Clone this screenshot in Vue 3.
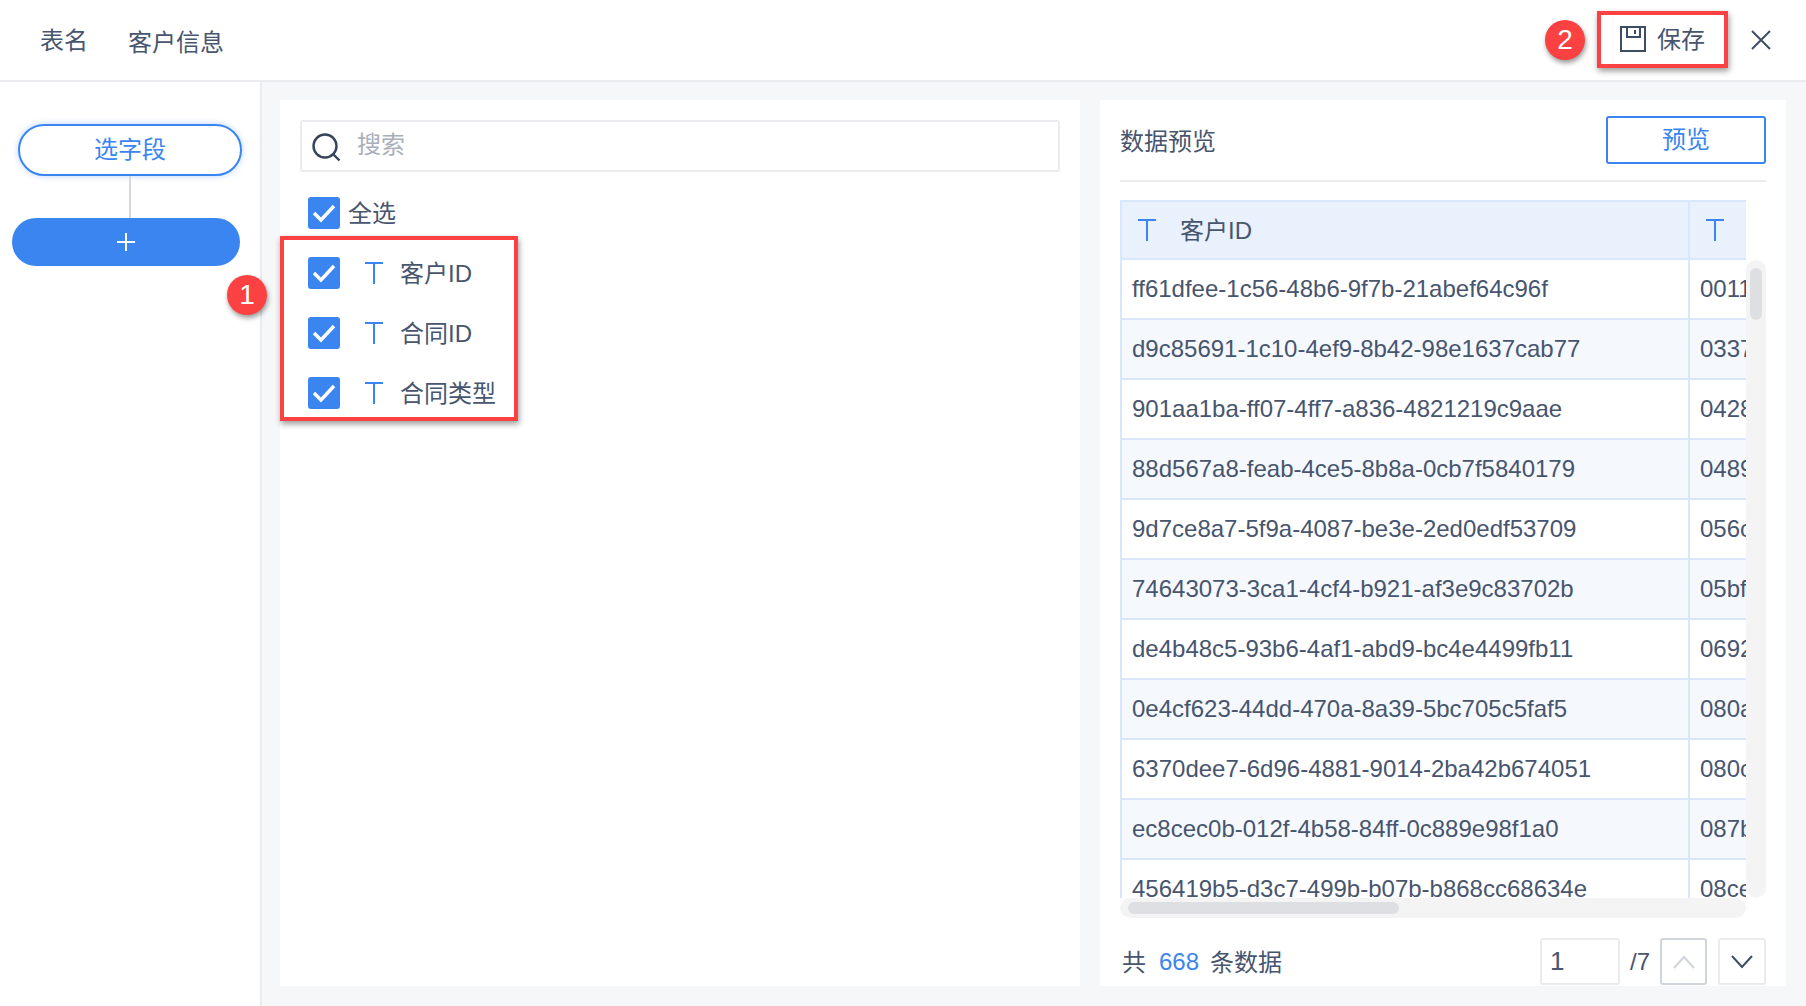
<script setup>
const fields = ['客户ID', '合同ID', '合同类型']
const rows = [
  ['ff61dfee-1c56-48b6-9f7b-21abef64c96f', '0011a2b3'],
  ['d9c85691-1c10-4ef9-8b42-98e1637cab77', '0337c1d2'],
  ['901aa1ba-ff07-4ff7-a836-4821219c9aae', '0428e5f6'],
  ['88d567a8-feab-4ce5-8b8a-0cb7f5840179', '0489a7b8'],
  ['9d7ce8a7-5f9a-4087-be3e-2ed0edf53709', '056c1f2e'],
  ['74643073-3ca1-4cf4-b921-af3e9c83702b', '05bf3d4c'],
  ['de4b48c5-93b6-4af1-abd9-bc4e4499fb11', '06925a6b'],
  ['0e4cf623-44dd-470a-8a39-5bc705c5faf5', '080a7c8d'],
  ['6370dee7-6d96-4881-9014-2ba42b674051', '080c9e0f'],
  ['ec8cec0b-012f-4b58-84ff-0c889e98f1a0', '087b1a2b'],
  ['456419b5-d3c7-499b-b07b-b868cc68634e', '08ce3c4d'],
]
</script>

<template>
  <div class="page">
    <header class="top">
      <span class="tname">表名</span>
      <span class="tval">客户信息</span>
      <div class="spacer"></div>
      <div class="save">
        <svg class="save-ic" width="26" height="26" viewBox="0 0 26 26" fill="none" stroke="#3d4d66" stroke-width="2">
          <path d="M1 1h24v24H1z" />
          <path d="M7 1v10h13V1" />
          <path d="M15 4v4" />
        </svg>
        <span class="save-label">保存</span>
      </div>
      <svg class="close" width="22" height="22" viewBox="0 0 22 22" fill="none" stroke="#3d4d66" stroke-width="2">
        <path d="M2 2l18 18M20 2L2 20" />
      </svg>
    </header>

    <div class="body">
      <aside class="side">
        <div class="node">选字段</div>
        <div class="link"></div>
        <div class="add">
          <svg width="18" height="18" viewBox="0 0 18 18" stroke="#fff" stroke-width="2"><path d="M9 0v18M0 9h18" /></svg>
        </div>
      </aside>

      <section class="mid">
        <div class="search">
          <svg width="30" height="30" viewBox="0 0 30 30" fill="none" stroke="#35435b" stroke-width="2.4">
            <circle cx="14" cy="14" r="11.5" />
            <path d="M22.5 22.5l6 6" />
          </svg>
          <span>搜索</span>
        </div>
        <div class="check-row all">
          <span class="cb"><svg width="24" height="20" viewBox="0 0 24 20" fill="none" stroke="#fff" stroke-width="3.4"><path d="M2 10l7 7L22 3" /></svg></span>
          <span class="all-label">全选</span>
        </div>
        <div v-for="f in fields" :key="f" class="check-row">
          <span class="cb"><svg width="24" height="20" viewBox="0 0 24 20" fill="none" stroke="#fff" stroke-width="3.4"><path d="M2 10l7 7L22 3" /></svg></span>
          <svg class="t" width="20" height="24" viewBox="0 0 20 24" fill="none" stroke="#3a85f0" stroke-width="2"><path d="M1 2h18M10 2v21" /></svg>
          <span class="f-label">{{ f }}</span>
        </div>
      </section>

      <section class="right">
        <div class="r-head">
          <span class="r-title">数据预览</span>
          <div class="btn">预览</div>
        </div>
        <div class="grid-wrap">
          <div class="grid">
            <div class="tr th">
              <div class="c1">
                <svg width="18" height="24" viewBox="0 0 18 24" fill="none" stroke="#3a85f0" stroke-width="2"><path d="M0 2h18M9 2v21" /></svg>
                <span class="th-label">客户ID</span>
              </div>
              <div class="c2">
                <svg width="18" height="24" viewBox="0 0 18 24" fill="none" stroke="#3a85f0" stroke-width="2"><path d="M0 2h18M9 2v21" /></svg>
              </div>
            </div>
            <div v-for="r in rows" :key="r[0]" class="tr">
              <div class="c1">{{ r[0] }}</div>
              <div class="c2">{{ r[1] }}</div>
            </div>
          </div>
          <div class="vbar"><div class="vthumb"></div></div>
        </div>
        <div class="hbar"><div class="hthumb"></div></div>
        <div class="foot">
          <span class="foot-t">共</span>
          <span class="num">668</span>
          <span class="foot-t">条数据</span>
          <div class="spacer"></div>
          <div class="pg-input">1</div>
          <span class="pg-total">/7</span>
          <div class="pg-btn up">
            <svg width="22" height="14" viewBox="0 0 22 14" fill="none" stroke="#d0d4db" stroke-width="2"><path d="M1 13L11 2l10 11" /></svg>
          </div>
          <div class="pg-btn down">
            <svg width="22" height="14" viewBox="0 0 22 14" fill="none" stroke="#3d4d66" stroke-width="2"><path d="M1 1l10 11L21 1" /></svg>
          </div>
        </div>
      </section>
    </div>

    <div class="mark mark-fields"></div>
    <div class="mark mark-save"></div>
    <div class="badge badge-1">1</div>
    <div class="badge badge-2">2</div>
  </div>
</template>

<style>
html, body { margin: 0; background: #fff; }
</style>

<style scoped>
.page {
  position: relative;
  width: 1806px;
  height: 1006px;
  overflow: hidden;
  display: flex;
  flex-direction: column;
  font-family: "Liberation Sans", "Noto Sans CJK SC", sans-serif;
  font-size: 24px;
  color: #47556e;
  background: #f6f7f9;
}
.top {
  height: 80px;
  flex: none;
  display: flex;
  align-items: center;
  background: #fff;
  border-bottom: 2px solid #e9ebef;
  padding: 0 34px 0 40px;
}
.tname { margin-right: 40px; margin-top: -3px; }
.spacer { flex: 1; }
.save { display: flex; align-items: center; gap: 11px; margin-right: 45px; margin-top: -2px; }
.save-label { margin-top: -3px; }
.save-ic { display: block; }
.close { display: block; margin-top: -1px; }

.body { flex: 1; display: flex; min-height: 0; }
.side {
  width: 260px;
  flex: none;
  background: #fff;
  border-right: 2px solid #e9ebef;
  display: flex;
  flex-direction: column;
  padding-top: 42px;
}
.node {
  width: 224px;
  height: 52px;
  margin-left: 18px;
  box-sizing: border-box;
  border: 2px solid #3a85f0;
  border-radius: 26px;
  box-shadow: 0 0 6px rgba(58, 133, 240, 0.35);
  color: #3a85f0;
  padding-bottom: 6px;
  display: flex;
  align-items: center;
  justify-content: center;
}
.link { width: 2px; height: 42px; background: #d5d8de; margin-left: 129px; }
.add {
  width: 228px;
  height: 48px;
  margin-left: 12px;
  border-radius: 24px;
  background: #3a85f0;
  display: flex;
  align-items: center;
  justify-content: center;
}
.add svg { display: block; margin-left: -1px; }

.mid {
  width: 800px;
  height: 886px;
  flex: none;
  box-sizing: border-box;
  margin: 18px 0 0 18px;
  padding: 20px 20px 0;
  background: #fff;
}
.search {
  height: 52px;
  box-sizing: border-box;
  border: 2px solid #e9ebef;
  border-radius: 3px;
  display: flex;
  align-items: center;
  gap: 16px;
  padding-left: 9px;
  color: #a9afba;
}
.search svg { display: block; margin-top: 2px; }
.search span { margin-top: -8px; }
.check-row { height: 60px; display: flex; align-items: center; padding-left: 8px; }
.check-row.all { margin-top: 11px; }
.cb {
  width: 32px;
  height: 32px;
  border-radius: 3px;
  background: #3a85f0;
  display: flex;
  align-items: center;
  justify-content: center;
}
.cb svg { display: block; }
.all-label { margin-left: 8px; margin-top: -3px; }
.t { display: block; margin-left: 24px; }
.f-label { margin-left: 16px; margin-top: -3px; }

.right {
  width: 686px;
  height: 886px;
  flex: none;
  box-sizing: border-box;
  margin: 18px 0 0 20px;
  padding: 0 20px;
  background: #fff;
}
.r-head {
  height: 82px;
  box-sizing: border-box;
  padding-top: 16px;
  border-bottom: 2px solid #e9ebef;
  display: flex;
  justify-content: space-between;
}
.r-title { margin-top: 9px; line-height: 34px; }
.btn {
  width: 160px;
  height: 48px;
  box-sizing: border-box;
  border: 2px solid #3a85f0;
  border-radius: 3px;
  color: #3a85f0;
  padding-bottom: 6px;
  display: flex;
  align-items: center;
  justify-content: center;
}
.grid-wrap { display: flex; margin-top: 18px; height: 698px; }
.grid { width: 626px; height: 698px; overflow: hidden; flex: none; }
.tr {
  display: flex;
  height: 60px;
  box-sizing: border-box;
  border-bottom: 2px solid #d8e7fb;
  border-left: 2px solid #d8e7fb;
}
.tr:nth-child(odd):not(.th) { background: #f5f8fd; }
.th { background: #e9f1fd; border-top: 2px solid #d8e7fb; }
.c1 {
  width: 568px;
  flex: none;
  box-sizing: border-box;
  border-right: 2px solid #d8e7fb;
  padding-left: 10px;
  display: flex;
  align-items: center;
  white-space: nowrap;
}
.c2 {
  flex: 1;
  min-width: 0;
  overflow: hidden;
  padding-left: 10px;
  display: flex;
  align-items: center;
  white-space: nowrap;
}
.th .c1 { padding-left: 16px; gap: 24px; }
.th .c2 { padding-left: 16px; }
.th svg { display: block; flex: none; }
.th-label { margin-top: -3px; }
.vbar {
  width: 20px;
  height: 638px;
  margin-top: 60px;
  background: #f4f4f5;
  border-radius: 10px;
  padding: 8px 4px 0;
  box-sizing: border-box;
}
.vthumb { height: 52px; background: #dedfe3; border-radius: 6px; }
.hbar {
  width: 626px;
  height: 20px;
  background: #f4f4f5;
  border-radius: 10px;
  padding: 4px 8px;
  box-sizing: border-box;
}
.hthumb { width: 271px; height: 12px; background: #dedfe3; border-radius: 6px; }
.foot {
  height: 47px;
  margin-top: 20px;
  display: flex;
  align-items: center;
  padding-left: 2px;
}
.foot-t { margin-top: -3px; }
.num { color: #3a85f0; margin: 0 11px 0 13px; }
.pg-input {
  width: 80px;
  height: 47px;
  box-sizing: border-box;
  border: 2px solid #e9ebef;
  border-radius: 3px;
  display: flex;
  align-items: center;
  padding-left: 8px;
  font-size: 26px;
}
.pg-total { margin-left: 10px; width: 30px; }
.pg-btn {
  width: 47px;
  height: 47px;
  box-sizing: border-box;
  border: 2px solid #e9ebef;
  border-radius: 3px;
  display: flex;
  align-items: center;
  justify-content: center;
}
.pg-btn svg { display: block; }
.pg-btn.up { border-color: #d0d4db; margin-right: 11px; }
.pg-btn.down { width: 48px; }

.mark {
  position: absolute;
  box-sizing: border-box;
  border: 4px solid #fb4141;
  box-shadow: 1px 3px 6px rgba(0, 0, 0, 0.4);
}
.mark-fields { left: 280px; top: 236px; width: 238px; height: 185px; }
.mark-save { left: 1597px; top: 11px; width: 131px; height: 57px; }
.badge {
  position: absolute;
  width: 40px;
  height: 40px;
  border-radius: 50%;
  background: #fb4141;
  color: #fff;
  font-size: 28px;
  display: flex;
  align-items: center;
  justify-content: center;
  box-shadow: 1px 3px 5px rgba(0, 0, 0, 0.4);
}
.badge-1 { left: 227px; top: 275px; }
.badge-2 { left: 1545px; top: 20px; }
</style>
